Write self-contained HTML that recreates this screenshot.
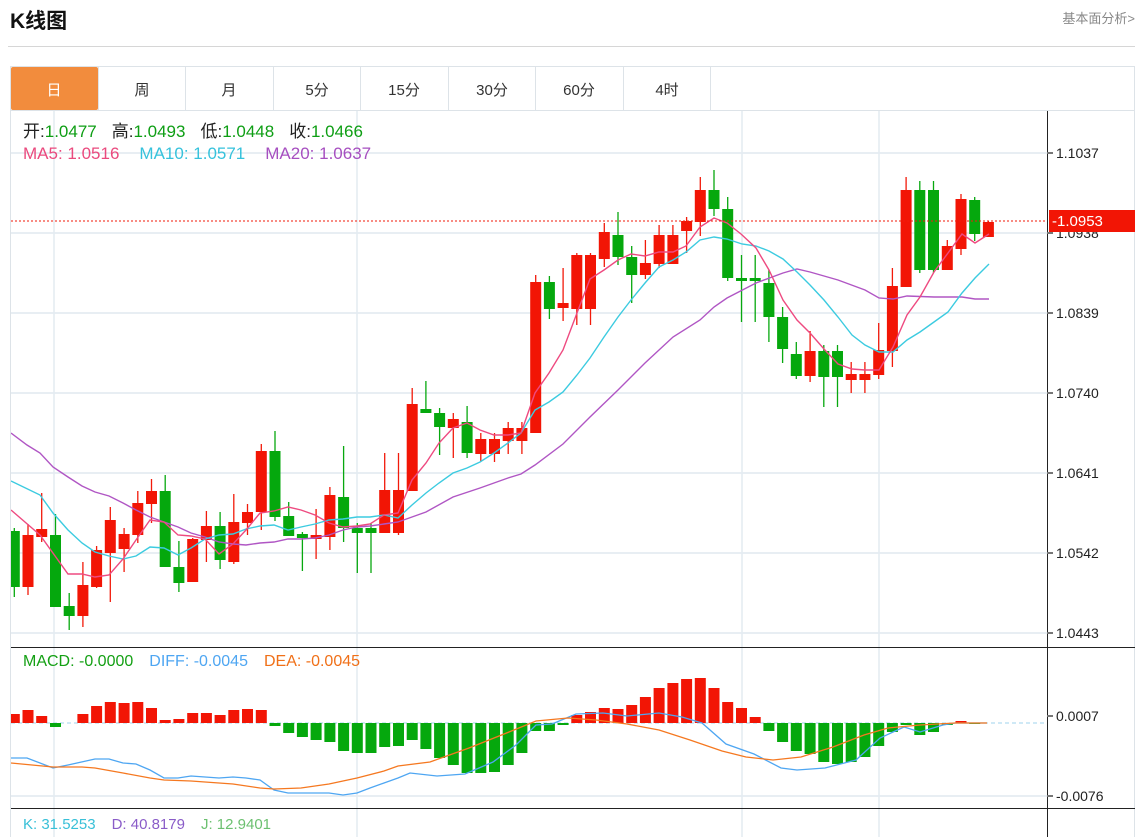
<!DOCTYPE html>
<html><head><meta charset="utf-8"><style>
html,body{margin:0;padding:0;background:#fff;width:1143px;height:837px;overflow:hidden}
svg{display:block;font-family:"Liberation Sans","Noto Sans CJK SC",sans-serif}
</style></head><body>
<svg width="1143" height="837" viewBox="0 0 1143 837" xmlns="http://www.w3.org/2000/svg">
<defs><clipPath id="cp"><rect x="11" y="111" width="1036" height="536"/></clipPath><clipPath id="cm"><rect x="11" y="648" width="1036" height="160"/></clipPath></defs>
<text x="10" y="28" font-size="21" font-weight="bold" fill="#111">K线图</text>
<text x="1135" y="23" font-size="13" fill="#888" text-anchor="end">基本面分析&gt;</text>
<line x1="8" y1="46.5" x2="1135" y2="46.5" stroke="#d6d6d6"/>
<rect x="10.5" y="66.5" width="1124" height="780" fill="none" stroke="#dde3e8"/>
<line x1="10" y1="110.5" x2="1135" y2="110.5" stroke="#dde3e8"/>
<rect x="11" y="67" width="87" height="43" fill="#f28c3d" rx="2"/>
<g stroke="#dde3e8"><line x1="98.5" y1="67" x2="98.5" y2="110"/><line x1="185.5" y1="67" x2="185.5" y2="110"/><line x1="273.5" y1="67" x2="273.5" y2="110"/><line x1="360.5" y1="67" x2="360.5" y2="110"/><line x1="448.5" y1="67" x2="448.5" y2="110"/><line x1="535.5" y1="67" x2="535.5" y2="110"/><line x1="623.5" y1="67" x2="623.5" y2="110"/><line x1="710.5" y1="67" x2="710.5" y2="110"/></g>
<g font-size="15" text-anchor="middle" fill="#333"><text x="54" y="95" fill="#fff">日</text><text x="142" y="95">周</text><text x="229" y="95">月</text><text x="317" y="95">5分</text><text x="404" y="95">15分</text><text x="492" y="95">30分</text><text x="579" y="95">60分</text><text x="667" y="95">4时</text></g>
<g stroke="#e8eef3" stroke-width="2"><line x1="11" y1="153" x2="1047" y2="153"/><line x1="11" y1="233" x2="1047" y2="233"/><line x1="11" y1="313" x2="1047" y2="313"/><line x1="11" y1="393" x2="1047" y2="393"/><line x1="11" y1="473" x2="1047" y2="473"/><line x1="11" y1="553" x2="1047" y2="553"/><line x1="11" y1="633" x2="1047" y2="633"/><line x1="11" y1="796" x2="1047" y2="796"/></g>
<g stroke="#e4ebf1" stroke-width="1.5"><line x1="54" y1="111" x2="54" y2="837"/><line x1="357" y1="111" x2="357" y2="837"/><line x1="742" y1="111" x2="742" y2="837"/><line x1="879" y1="111" x2="879" y2="837"/></g>
<line x1="11" y1="723" x2="1047" y2="723" stroke="#9fd3ee" stroke-dasharray="4,3"/>
<g clip-path="url(#cp)">
<path fill="none" stroke="#07a80f" stroke-width="1.3" d="M14.3 528V597M55.5 514V607M69.2 593V630M165.2 475V567M178.9 541V592M220.1 512V569M275 431V521M288.7 502V536M302.4 532V571M343.6 446V542M357.3 523V573M371 523V573M425.9 381V413M439.6 408V455M467.1 406V458M549.4 276V319M618 212V265M631.7 246V303M714 170V216M727.7 197V281M741.5 255V322M755.2 255V322M768.9 270V342M782.6 307V363M796.3 342V379M823.8 345V407M837.5 345V407M919.8 181V273M933.5 181V273M974.7 197V241"/>
<path fill="#05a80d" d="M8.8 531h11v56h-11zM50 535h11v72h-11zM63.7 606h11v10h-11zM159.7 491h11v76h-11zM173.4 567h11v16h-11zM214.6 526h11v34h-11zM269.5 451h11v66h-11zM283.2 516h11v20h-11zM296.9 534h11v4h-11zM338.1 497h11v31h-11zM351.8 528h11v5h-11zM365.5 528h11v5h-11zM420.4 409h11v4h-11zM434.1 413h11v14h-11zM461.6 422h11v31h-11zM543.9 282h11v27h-11zM612.5 235h11v22h-11zM626.2 257h11v18h-11zM708.5 190h11v19h-11zM722.2 209h11v69h-11zM736 278h11v3h-11zM749.7 278h11v3h-11zM763.4 283h11v34h-11zM777.1 317h11v32h-11zM790.8 354h11v22h-11zM818.3 351h11v26h-11zM832 351h11v26h-11zM914.3 190h11v80h-11zM928 190h11v80h-11zM969.2 200h11v34h-11z"/>
<path fill="none" stroke="#f21a0a" stroke-width="1.3" d="M28 524V595M41.7 493V542M82.9 562V627M96.6 546V588M110.3 507V602M124.1 528V572M137.8 491V543M151.5 479V523M192.7 538V582M206.4 511V562M233.8 494V564M247.5 504V535M261.3 444V530M316.1 509V559M329.9 487V550M384.7 453V533M398.5 453V535M412.2 388V491M453.3 413V458M480.8 433V462M494.5 433V462M508.2 422V454M521.9 422V454M535.7 275V433M563.1 268V321M576.8 253V325M590.5 253V325M604.3 223V267M645.4 240V279M659.1 225V268M672.9 225V264M686.6 217V253M700.3 177V236M810.1 331V382M851.2 362V393M864.9 362V393M878.7 323V379M892.4 268V367M906.1 177V287M947.3 240V270M961 194V255M988.4 221V237"/>
<path fill="#f21505" d="M22.5 535h11v52h-11zM36.2 529h11v8h-11zM77.4 585h11v31h-11zM91.1 550h11v37h-11zM104.8 520h11v33h-11zM118.6 534h11v15h-11zM132.3 503h11v32h-11zM146 491h11v13h-11zM187.2 539h11v43h-11zM200.9 526h11v14h-11zM228.3 522h11v40h-11zM242 512h11v11h-11zM255.8 451h11v61h-11zM310.6 535h11v4h-11zM324.4 495h11v42h-11zM379.2 490h11v43h-11zM393 490h11v43h-11zM406.7 404h11v87h-11zM447.8 419h11v9h-11zM475.3 439h11v15h-11zM489 439h11v15h-11zM502.7 428h11v13h-11zM516.4 428h11v13h-11zM530.2 282h11v151h-11zM557.6 303h11v5h-11zM571.3 255h11v54h-11zM585 255h11v54h-11zM598.8 232h11v27h-11zM639.9 263h11v12h-11zM653.6 235h11v29h-11zM667.4 235h11v29h-11zM681.1 221h11v10h-11zM694.8 190h11v32h-11zM804.6 351h11v25h-11zM845.7 374h11v6h-11zM859.4 374h11v6h-11zM873.2 350h11v25h-11zM886.9 286h11v65h-11zM900.6 190h11v97h-11zM941.8 246h11v24h-11zM955.5 199h11v50h-11zM982.9 222h11v15h-11z"/>
<polyline fill="none" stroke="#b056c4" stroke-width="1.4" points="11,433 27,445 40,453 53,467 68,477 82,486 95,492 109,496 123,503 136,510 150,517 164,522 178,527 191,533 205,537 219,542 233,544 246,545 260,543 274,542 288,539 301,539 315,538 329,535 343,530 357,527 370,526 384,524 398,522 426,512 453,497 480,488 508,478 521,474 535,465 563,444 590,417 618,390 645,363 673,337 700,320 714,307 727,298 756,283 783,273 797,269 810,272 838,280 865,290 879,298 893,299 907,296 934,297 962,297 975,299 989,299"/>
<polyline fill="none" stroke="#3ccbe0" stroke-width="1.4" points="11,481 40,495 53,513 68,530 82,543 95,552 109,556 123,559 136,556 150,547 164,548 178,555 191,548 205,539 219,535 233,534 246,529 260,526 274,525 288,530 301,527 315,524 329,520 343,519 357,517 370,517 384,515 398,518 412,505 426,493 439,483 453,473 467,468 480,462 494,453 508,443 521,433 535,410 549,402 563,392 577,375 590,358 604,337 618,317 631,300 645,283 659,267 673,260 686,252 700,240 714,237 727,239 742,244 756,246 769,251 783,259 797,272 810,285 824,300 838,317 852,335 865,345 879,352 893,352 907,340 920,332 934,322 948,312 962,293 975,278 989,264"/>
<polyline fill="none" stroke="#ee4a80" stroke-width="1.4" points="11,510 40,535 68,574 82,574 95,577 109,575 123,559 136,540 150,520 164,522 178,535 191,536 205,539 219,554 233,544 246,530 260,513 274,511 288,507 301,510 315,515 329,523 343,527 357,526 370,524 384,515 398,513 412,480 426,463 439,443 453,428 467,423 480,430 494,435 508,435 521,433 535,393 549,373 563,350 577,313 590,279 604,270 618,260 631,254 645,256 659,252 673,252 686,246 700,227 714,218 727,223 741,234 756,248 769,270 783,300 797,320 810,333 824,349 838,364 852,369 865,370 879,370 893,347 907,315 920,297 934,272 948,253 962,234 975,243 989,234"/>
</g>
<line x1="11" y1="221" x2="1047" y2="221" stroke="#f21a0a" stroke-dasharray="2,2"/>
<g clip-path="url(#cm)">
<path fill="#f21505" d="M8.8 714h11v9h-11zM22.5 710h11v13h-11zM36.2 716h11v7h-11zM77.4 714h11v9h-11zM91.1 706h11v17h-11zM104.8 702h11v21h-11zM118.6 703h11v20h-11zM132.3 702h11v21h-11zM146 708h11v15h-11zM159.7 720h11v3h-11zM173.4 719h11v4h-11zM187.2 713h11v10h-11zM200.9 713h11v10h-11zM214.6 715h11v8h-11zM228.3 710h11v13h-11zM242 709h11v14h-11zM255.8 710h11v13h-11zM571.3 715h11v8h-11zM585 712h11v11h-11zM598.8 708h11v15h-11zM612.5 709h11v14h-11zM626.2 705h11v18h-11zM639.9 697h11v26h-11zM653.6 688h11v35h-11zM667.4 683h11v40h-11zM681.1 679h11v44h-11zM694.8 678h11v45h-11zM708.5 688h11v35h-11zM722.2 702h11v21h-11zM736 708h11v15h-11zM749.7 717h11v6h-11zM955.5 721h11v2h-11z"/>
<path fill="#05a80d" d="M50 723h11v4h-11zM269.5 723h11v3h-11zM283.2 723h11v10h-11zM296.9 723h11v14h-11zM310.6 723h11v17h-11zM324.4 723h11v19h-11zM338.1 723h11v28h-11zM351.8 723h11v30h-11zM365.5 723h11v30h-11zM379.2 723h11v24h-11zM393 723h11v23h-11zM406.7 723h11v17h-11zM420.4 723h11v26h-11zM434.1 723h11v35h-11zM447.8 723h11v42h-11zM461.6 723h11v50h-11zM475.3 723h11v50h-11zM489 723h11v49h-11zM502.7 723h11v42h-11zM516.4 723h11v30h-11zM530.2 723h11v8h-11zM543.9 723h11v8h-11zM557.6 723h11v2h-11zM763.4 723h11v8h-11zM777.1 723h11v19h-11zM790.8 723h11v28h-11zM804.6 723h11v31h-11zM818.3 723h11v39h-11zM832 723h11v41h-11zM845.7 723h11v39h-11zM859.4 723h11v34h-11zM873.2 723h11v23h-11zM886.9 723h11v9h-11zM900.6 723h11v2h-11zM914.3 723h11v12h-11zM928 723h11v9h-11zM941.8 723h11v2h-11zM969.2 723h11v1h-11z"/>
<polyline fill="none" stroke="#4ea6f2" stroke-width="1.3" points="11,758 27,758 53,768 68,765 95,759 109,759 123,763 136,764 150,770 164,778 178,778 191,776 205,777 219,778 233,777 246,778 260,780 274,790 288,793 315,793 329,793 343,795 357,793 370,788 384,783 398,778 410,773 437,776 465,774 493,762 516,745 536,725 552,724 576,714 603,713 627,716 659,713 682,717 702,723 726,744 754,754 781,768 797,770 825,768 856,760 880,738 904,727 920,732 943,725 955,723 987,723"/>
<polyline fill="none" stroke="#f57820" stroke-width="1.3" points="11,763 53,767 82,767 95,768 123,773 150,778 164,780 191,781 233,784 260,788 274,789 301,788 329,784 357,778 384,771 398,766 430,762 469,748 509,732 536,721 568,718 596,720 627,724 659,730 690,740 722,751 746,757 773,760 801,757 833,747 864,735 888,728 920,725 955,723 987,723"/>
</g>
<line x1="11" y1="647.5" x2="1135" y2="647.5" stroke="#222"/>
<line x1="11" y1="808.5" x2="1135" y2="808.5" stroke="#222"/>
<line x1="1047.5" y1="111" x2="1047.5" y2="837" stroke="#222"/>
<g stroke="#777" stroke-width="2"><line x1="1047" y1="153" x2="1053" y2="153"/><line x1="1047" y1="233" x2="1053" y2="233"/><line x1="1047" y1="313" x2="1053" y2="313"/><line x1="1047" y1="393" x2="1053" y2="393"/><line x1="1047" y1="473" x2="1053" y2="473"/><line x1="1047" y1="553" x2="1053" y2="553"/><line x1="1047" y1="633" x2="1053" y2="633"/><line x1="1047" y1="716" x2="1053" y2="716"/><line x1="1047" y1="796" x2="1053" y2="796"/></g>
<g font-size="14" fill="#222"><text x="1056" y="158">1.1037</text><text x="1056" y="238">1.0938</text><text x="1056" y="318">1.0839</text><text x="1056" y="398">1.0740</text><text x="1056" y="478">1.0641</text><text x="1056" y="558">1.0542</text><text x="1056" y="638">1.0443</text><text x="1056" y="721">0.0007</text><text x="1056" y="801">-0.0076</text></g>
<rect x="1049" y="210" width="86" height="22" fill="#f21505"/>
<text x="1052" y="226" font-size="15" fill="#fff">-1.0953</text>
<g font-size="17"><text x="23" y="137"><tspan fill="#222">开:</tspan><tspan fill="#0e9e14">1.0477</tspan><tspan fill="#222" dx="15">高:</tspan><tspan fill="#0e9e14">1.0493</tspan><tspan fill="#222" dx="15">低:</tspan><tspan fill="#0e9e14">1.0448</tspan><tspan fill="#222" dx="15">收:</tspan><tspan fill="#0e9e14">1.0466</tspan></text>
<text x="23" y="159"><tspan fill="#ea4a7e">MA5: 1.0516</tspan><tspan fill="#36c2dc" dx="20">MA10: 1.0571</tspan><tspan fill="#a64fc0" dx="20">MA20: 1.0637</tspan></text></g>
<g font-size="16"><text x="23" y="666"><tspan fill="#14a014">MACD: -0.0000</tspan><tspan fill="#4ea6f2" dx="16">DIFF: -0.0045</tspan><tspan fill="#f07018" dx="16">DEA: -0.0045</tspan></text></g>
<g font-size="15"><text x="23" y="829"><tspan fill="#39c0d8">K: 31.5253</tspan><tspan fill="#8a5cc8" dx="16">D: 40.8179</tspan><tspan fill="#6cc070" dx="16">J: 12.9401</tspan></text></g>
</svg>
</body></html>
